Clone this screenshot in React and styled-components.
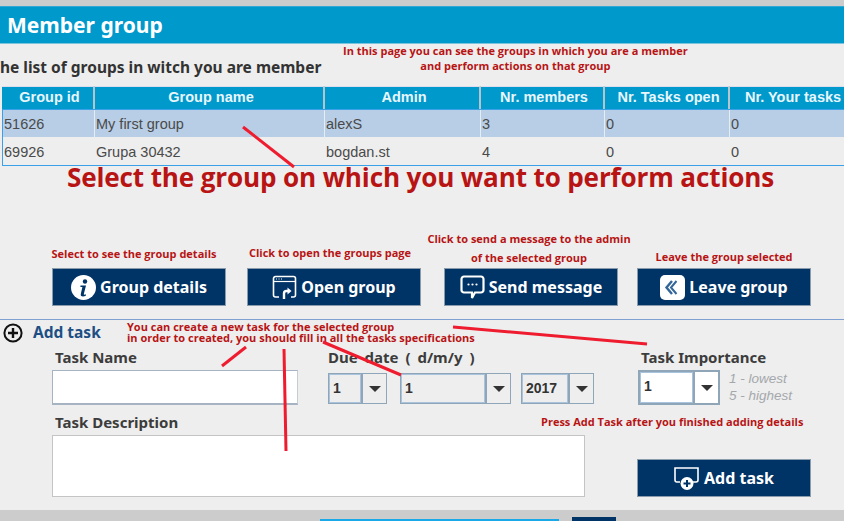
import React from 'react'
import styled, { createGlobalStyle } from 'styled-components'

const GlobalStyle = createGlobalStyle`
  html, body {
    margin: 0;
    padding: 0;
    background: #eeeeee;
  }
`

const Page = styled.div`
  position: relative;
  display: flex;
  flex-direction: column;
  width: 844px;
  height: 521px;
  overflow: hidden;
  background: #eeeeee;
  border-top: 6px solid #cccccc;
  box-sizing: border-box;
  font-family: 'Liberation Sans', Arial, sans-serif;
`

const Header = styled.h1`
  margin: 0;
  flex: none;
  height: 38px;
  padding-left: 7px;
  background: #0099cc;
  border-top: 1px solid #33a8d4;
  border-bottom: 1px solid #7cc4de;
  box-sizing: border-box;
  color: #fff;
  font: bold 21px/37px 'Noto Sans', sans-serif;
`

const ListTitle = styled.h2`
  margin: 13px 0 0 -9px;
  height: 22px;
  color: #333;
  font: bold 15.5px/21px 'Noto Sans', sans-serif;
  white-space: nowrap;
`

const Table = styled.div`
  margin: 7px 0 0 2px;
  width: 860px;
`

const HeadRow = styled.div`
  display: grid;
  grid-template-columns: 93px 230px 156px 124px 125px 132px;
  height: 24px;
`

const HeadCell = styled.div`
  background: #0099cc;
  border-right: 2px solid #b8c4cc;
  border-top: 1px solid #dde;
  color: #e8f6fb;
  font: bold 14.5px/21px 'Liberation Sans', sans-serif;
  text-align: center;
  padding-left: 4px;
  padding-right: ${(props) => props.$shift || 0}px;
`

const Rows = styled.div`
  position: relative;
  border: 1px solid #3aa0e8;
  margin-top: -1px;
  height: 57px;
  box-sizing: border-box;
`

const Row = styled.div`
  display: grid;
  grid-template-columns: 92px 230px 156px 124px 125px 132px;
  height: 27px;
  margin-bottom: ${(props) => (props.$selected ? 1 : 0)}px;
  background: ${(props) => (props.$selected ? '#b8cee6' : 'transparent')};
`

const Cell = styled.div`
  border-right: 1px solid ${(props) => (props.$selected ? '#e4ecf4' : 'transparent')};
  padding-left: 1px;
  color: #4a4a4a;
  font: 14.5px/29px 'Liberation Sans', sans-serif;
`

const BigNote = styled.div`
  margin: -4px 0 0 67px;
  height: 30px;
  color: #b81414;
  font: bold 26.1px/30px 'Open Sans', sans-serif;
  letter-spacing: -0.15px;
  white-space: nowrap;
`

const ActionRow = styled.div`
  display: flex;
  align-items: flex-end;
  height: 70px;
  margin-top: 44px;
  padding-left: 52px;
`

const ActionCell = styled.div`
  display: flex;
  flex-direction: column;
  align-items: center;
  width: 174px;
  margin-right: ${(props) => props.$gap}px;
`

const Caption = styled.div`
  margin-bottom: ${(props) => props.$below}px;
  padding-right: ${(props) => props.$shift}px;
  color: #b81414;
  font: bold 11px/19px 'Open Sans', sans-serif;
  text-align: center;
  white-space: nowrap;
`

const DarkButton = styled.button`
  display: flex;
  align-items: center;
  justify-content: center;
  gap: 4px;
  width: 174px;
  height: 38px;
  padding: 0;
  background: #003366;
  border: 1px solid #8a9bab;
  color: #fff;
  font: bold 16px/1 'Noto Sans', sans-serif;
  box-sizing: border-box;
`

const Divider = styled.hr`
  margin: 13px 0 0;
  border: 0;
  border-top: 1px solid #7fa0d0;
`

const AddTaskRow = styled.div`
  display: flex;
  align-items: center;
  gap: 10px;
  height: 25px;
  padding: 0 0 0 3px;
`

const AddTaskTitle = styled.div`
  color: #1d4f85;
  font: bold 15.5px/25px 'Noto Sans', sans-serif;
`

const Form = styled.div`
  display: grid;
  grid-template-columns: 276px 313px 1fr;
  padding: 5px 0 0 52px;
  height: 69px;
  box-sizing: border-box;
`

const Field = styled.div`
  display: flex;
  flex-direction: column;
`

const Label = styled.label`
  height: 15px;
  margin-left: ${(props) => (props.$flush ? 0 : 3)}px;
  color: #3c3c3c;
  font: bold 15px/15px 'Noto Sans', sans-serif;
  word-spacing: ${(props) => props.$wordGap || 0}px;
  white-space: nowrap;
`

const TextInput = styled.div`
  width: 246px;
  height: 35px;
  margin-top: 5px;
  background: #fff;
  border: 1px solid #a5b3c2;
  border-right-color: #c4ccd4;
  border-bottom-width: 2px;
  box-sizing: border-box;
`

const DateRow = styled.div`
  display: flex;
  margin-top: 8px;
`

const Combo = styled.div`
  display: flex;
  flex: none;
  width: ${(props) => props.$width}px;
  height: ${(props) => props.$height || 31}px;
  margin-left: ${(props) => props.$left || 0}px;
  border: ${(props) => (props.$white ? 2 : 1)}px solid #8fa5b8;
  background: ${(props) => (props.$white ? '#fff' : '#eeeeee')};
  box-sizing: border-box;
`

const ComboValue = styled.div`
  flex: 1;
  padding-left: 3px;
  border: 1px solid #a9c3dc;
  color: #333;
  font: bold 14px/26px 'Liberation Sans', sans-serif;
`

const ComboArrow = styled.div`
  display: flex;
  align-items: center;
  justify-content: center;
  width: 23px;
  border-left: 2px solid #8fa5b8;
  &::after {
    content: '';
    border-left: 6px solid transparent;
    border-right: 6px solid transparent;
    border-top: 6px solid #333;
  }
`

const ImportanceRow = styled.div`
  display: flex;
  gap: 9px;
  margin: 5px 0 0 -3px;
`

const Hint = styled.div`
  color: #a4a8ac;
  font: italic 13.5px/17px 'Liberation Sans', sans-serif;
`

const LowerRow = styled.div`
  display: flex;
  align-items: flex-end;
  justify-content: space-between;
  padding: 0 33px 0 52px;
  margin-top: 1px;
`

const TextArea = styled.div`
  width: 533px;
  height: 62px;
  margin-top: 5px;
  background: #fff;
  border: 1px solid #c4c4c4;
  box-sizing: border-box;
`

const Footer = styled.div`
  display: flex;
  gap: 13px;
  flex: none;
  height: 11px;
  margin-top: auto;
  padding-left: 320px;
  background: #cccccc;
`

const FooterBar = styled.div`
  width: ${(props) => props.$width}px;
  margin-top: ${(props) => props.$top}px;
  background: ${(props) => props.$color};
`

const Note = styled.div`
  position: absolute;
  left: ${(props) => props.$x}px;
  top: ${(props) => props.$y}px;
  color: #b81414;
  font: bold 11px/${(props) => props.$line || 11}px 'Open Sans', sans-serif;
  text-align: ${(props) => props.$align || 'left'};
  white-space: nowrap;
`

const Arrows = styled.svg`
  position: absolute;
  left: 0;
  top: -6px;
  pointer-events: none;
`

const InfoIcon = () => (
  <svg width="25" height="25" viewBox="0 0 25 25">
    <circle cx="12.5" cy="12.5" r="12.5" fill="#fff" />
    <circle cx="14" cy="6.5" r="2.2" fill="#003366" />
    <path d="M9.5 10.5h5.5l-2.2 8.5c-.2.8.5.9 2 .3v1.4c-2.5 1.2-5.6 1-5-1.8l1.6-7h-2z" fill="#003366" />
  </svg>
)

const OpenIcon = () => (
  <svg width="25" height="25" viewBox="0 0 25 25" fill="none" stroke="#fff">
    <path d="M7 22H3.5A2 2 0 0 1 1.5 20V3.5a2 2 0 0 1 2-2h18a2 2 0 0 1 2 2V20a2 2 0 0 1-2 2H19" strokeWidth="1.6" />
    <path d="M1.5 6.5h22" strokeWidth="1.2" />
    <path d="M4 4h1M6.5 4h1M9 4h1" strokeWidth="1" />
    <path d="M12 24v-5.5c0-1.5 1-2.5 2.5-2.5H18" strokeWidth="2.4" />
    <path d="M15.5 12.5 19.5 16l-4 3.5z" fill="#fff" stroke="none" />
  </svg>
)

const MessageIcon = () => (
  <svg width="25" height="25" viewBox="0 0 25 25" fill="none">
    <path d="M4 1.5h17a2.5 2.5 0 0 1 2.5 2.5v11a2.5 2.5 0 0 1-2.5 2.5h-6L12 23v-5.5H4A2.5 2.5 0 0 1 1.5 15V4A2.5 2.5 0 0 1 4 1.5z" stroke="#fff" strokeWidth="2.2" />
    <circle cx="8.5" cy="9.5" r="1.1" fill="#fff" />
    <circle cx="12.5" cy="9.5" r="1.1" fill="#fff" />
    <circle cx="16.5" cy="9.5" r="1.1" fill="#fff" />
  </svg>
)

const LeaveIcon = () => (
  <svg width="25" height="25" viewBox="0 0 25 25" fill="none">
    <rect width="25" height="25" rx="5" fill="#fff" />
    <path d="M12 6 6.5 12.5 12 19" stroke="#336699" strokeWidth="2.4" />
    <path d="M16.5 6 11 12.5l5.5 6.5" stroke="#336699" strokeWidth="2" />
  </svg>
)

const AddIcon = () => (
  <svg width="26" height="29" viewBox="0 0 26 29" fill="none">
    <path d="M6 18H3a2 2 0 0 1-2-2V4h23v12a2 2 0 0 1-2 2h-3" stroke="#fff" strokeWidth="1.6" />
    <circle cx="13" cy="19.5" r="6.5" fill="#fff" />
    <path d="M13 16v7M9.5 19.5h7" stroke="#003366" strokeWidth="2" />
  </svg>
)

const PlusCircle = () => (
  <svg width="20" height="20" viewBox="0 0 20 20" fill="none">
    <circle cx="10" cy="10" r="8.6" stroke="#111" strokeWidth="2" />
    <path d="M10 5v10M5 10h10" stroke="#111" strokeWidth="2.4" />
  </svg>
)

const columns = [
  ['Group id', 0],
  ['Group name', 0],
  ['Admin', 0],
  ['Nr. members', 0],
  ['Nr. Tasks open', 0],
  ['Nr. Your tasks', 8],
]

const groups = [
  ['51626', 'My first group', 'alexS', '3', '0', '0'],
  ['69926', 'Grupa 30432', 'bogdan.st', '4', '0', '0'],
]

const actions = [
  { label: 'Group details', icon: <InfoIcon />, caption: ['Select to see the group details'], below: 5, shift: 10, gap: 21 },
  { label: 'Open group', icon: <OpenIcon />, caption: ['Click to open the groups page'], below: 6, shift: 8, gap: 23 },
  { label: 'Send message', icon: <MessageIcon />, caption: ['Click to send a message to the admin', 'of the selected group'], below: 1, shift: 4, gap: 19 },
  { label: 'Leave group', icon: <LeaveIcon />, caption: ['Leave the group selected'], below: 2, shift: 0, gap: 0 },
]

const redLines = [
  [243, 127, 294, 167],
  [246, 347, 222, 366],
  [284, 349, 286, 451],
  [323, 342, 401, 375],
  [453, 327, 647, 344],
]

export default function App() {
  return (
    <Page>
      <GlobalStyle />
      <Header>Member group</Header>
      <ListTitle>The list of groups in witch you are member</ListTitle>
      <Table>
        <HeadRow>
          {columns.map(([name, shift]) => (
            <HeadCell key={name} $shift={shift}>
              {name}
            </HeadCell>
          ))}
        </HeadRow>
        <Rows>
          {groups.map((group, i) => (
            <Row key={group[0]} $selected={i === 0}>
              {group.map((value, idx) => (
                <Cell key={idx} $selected={i === 0}>
                  {value}
                </Cell>
              ))}
            </Row>
          ))}
        </Rows>
      </Table>
      <BigNote>Select the group on which you want to perform actions</BigNote>

      <ActionRow>
        {actions.map((action) => (
          <ActionCell key={action.label} $gap={action.gap}>
            <Caption $below={action.below} $shift={action.shift}>
              {action.caption.map((line) => (
                <div key={line}>{line}</div>
              ))}
            </Caption>
            <DarkButton>
              {action.icon}
              {action.label}
            </DarkButton>
          </ActionCell>
        ))}
      </ActionRow>

      <Divider />
      <AddTaskRow>
        <PlusCircle />
        <AddTaskTitle>Add task</AddTaskTitle>
      </AddTaskRow>

      <Form>
        <Field>
          <Label>Task Name</Label>
          <TextInput />
        </Field>
        <Field>
          <Label $flush $wordGap={3}>
            Due date ( d/m/y )
          </Label>
          <DateRow>
            <Combo $width={59}>
              <ComboValue>1</ComboValue>
              <ComboArrow />
            </Combo>
            <Combo $width={111} $left={13}>
              <ComboValue>1</ComboValue>
              <ComboArrow />
            </Combo>
            <Combo $width={73} $left={10}>
              <ComboValue>2017</ComboValue>
              <ComboArrow />
            </Combo>
          </DateRow>
        </Field>
        <Field>
          <Label $flush>Task Importance</Label>
          <ImportanceRow>
            <Combo $width={82} $height={35} $white>
              <ComboValue>1</ComboValue>
              <ComboArrow />
            </Combo>
            <Hint>
              1 - lowest
              <br />5 - highest
            </Hint>
          </ImportanceRow>
        </Field>
      </Form>

      <LowerRow>
        <Field>
          <Label>Task Description</Label>
          <TextArea />
        </Field>
        <DarkButton>
          <AddIcon />
          Add task
        </DarkButton>
      </LowerRow>

      <Footer>
        <FooterBar $width={239} $top={9} $color="#1aa9e6" />
        <FooterBar $width={44} $top={7} $color="#003366" />
      </Footer>

      <Note $x={343} $y={37} $line={15} $align="center">
        In this page you can see the groups in which you are a member
        <br />
        and perform actions on that group
      </Note>
      <Note $x={127} $y={315}>
        You can create a new task for the selected group
        <br />
        in order to created, you should fill in all the tasks specifications
      </Note>
      <Note $x={541} $y={410}>
        Press Add Task after you finished adding details
      </Note>

      <Arrows width="844" height="521" viewBox="0 0 844 521">
        {redLines.map(([x1, y1, x2, y2]) => (
          <line key={x1} x1={x1} y1={y1} x2={x2} y2={y2} stroke="#ee1c2e" strokeWidth="3" />
        ))}
      </Arrows>
    </Page>
  )
}
